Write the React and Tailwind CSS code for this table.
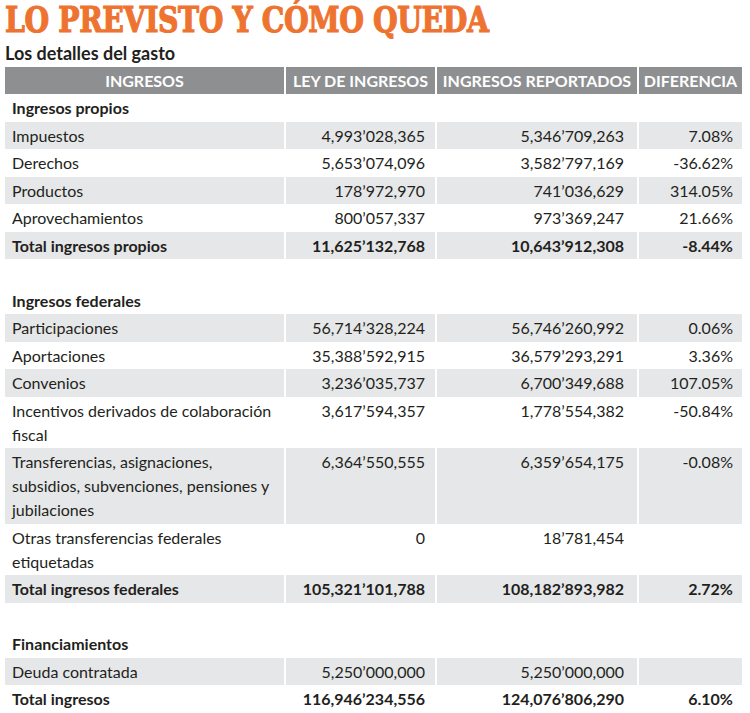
import React from "react";

const rows = [
  { type: "head", label: "Ingresos propios" },
  { label: "Impuestos", a: "4,993’028,365", b: "5,346’709,263", c: "7.08%", gray: true },
  { label: "Derechos", a: "5,653’074,096", b: "3,582’797,169", c: "-36.62%" },
  { label: "Productos", a: "178’972,970", b: "741’036,629", c: "314.05%", gray: true },
  { label: "Aprovechamientos", a: "800’057,337", b: "973’369,247", c: "21.66%" },
  { label: "Total ingresos propios", a: "11,625’132,768", b: "10,643’912,308", c: "-8.44%", gray: true, bold: true },
  { type: "blank" },
  { type: "head", label: "Ingresos federales" },
  { label: "Participaciones", a: "56,714’328,224", b: "56,746’260,992", c: "0.06%", gray: true },
  { label: "Aportaciones", a: "35,388’592,915", b: "36,579’293,291", c: "3.36%" },
  { label: "Convenios", a: "3,236’035,737", b: "6,700’349,688", c: "107.05%", gray: true },
  { label: ["Incentivos derivados de colaboración", "fiscal"], a: "3,617’594,357", b: "1,778’554,382", c: "-50.84%" },
  { label: ["Transferencias, asignaciones,", "subsidios, subvenciones, pensiones y", "jubilaciones"], a: "6,364’550,555", b: "6,359’654,175", c: "-0.08%", gray: true },
  { label: ["Otras transferencias federales", "etiquetadas"], a: "0", b: "18’781,454", c: "" },
  { label: "Total ingresos federales", a: "105,321’101,788", b: "108,182’893,982", c: "2.72%", gray: true, bold: true },
  { type: "blank" },
  { type: "head", label: "Financiamientos" },
  { label: "Deuda contratada", a: "5,250’000,000", b: "5,250’000,000", c: "", gray: true },
  { label: "Total ingresos", a: "116,946’234,556", b: "124,076’806,290", c: "6.10%", bold: true },
];

const cell = "pt-[2px] pb-[1.5px] leading-[24px]";

export default function App() {
  return (
    <div
      className="w-[750px] h-[713px] bg-white overflow-hidden text-[#231f20]"
      style={{ fontFamily: "Lato, 'Open Sans', sans-serif" }}
    >
      <div className="pl-[5px] pt-[1px]">
        <div
          className="text-[#ee7330] font-bold text-[35px] leading-[38px] tracking-[-0.5px] origin-left scale-x-[0.81] whitespace-nowrap [-webkit-text-stroke:1.2px_#ee7330]"
          style={{ fontFamily: "'DejaVu Serif', serif" }}
        >
          LO PREVISTO Y CÓMO QUEDA
        </div>
        <div className="font-bold text-[18px] leading-[22px] mt-[3px]">Los detalles del gasto</div>
      </div>
      <div className="mt-[3px] ml-[5px] grid grid-cols-[279px_149px_200px_103px] gap-x-[2px] text-[16px]">
        {["INGRESOS", "LEY DE INGRESOS", "INGRESOS REPORTADOS", "DIFERENCIA"].map((h) => (
          <div key={h} className="bg-[#8e8f91] text-white font-bold text-center h-[27px] leading-[27px]">
            {h}
          </div>
        ))}
        {rows.map((r, i) => {
          if (r.type === "blank") return <div key={i} className="col-span-4 h-[27.5px]" />;
          if (r.type === "head")
            return (
              <div key={i} className={`col-span-4 font-bold pl-[7px] ${cell}`}>
                {r.label}
              </div>
            );
          const bg = r.gray ? "bg-[#e6e7e8]" : "bg-white";
          const fw = r.bold ? "font-bold" : "";
          const lines = Array.isArray(r.label) ? r.label : [r.label];
          return (
            <React.Fragment key={i}>
              <div className={`${bg} ${fw} ${cell} pl-[7px]`}>
                {lines.map((l, j) => (
                  <div key={j}>{l}</div>
                ))}
              </div>
              <div className={`${bg} ${fw} ${cell} text-right pr-[10px]`}>{r.a}</div>
              <div className={`${bg} ${fw} ${cell} text-right pr-[13px]`}>{r.b}</div>
              <div className={`${bg} ${fw} ${cell} text-right pr-[9px]`}>{r.c}</div>
            </React.Fragment>
          );
        })}
      </div>
    </div>
  );
}
